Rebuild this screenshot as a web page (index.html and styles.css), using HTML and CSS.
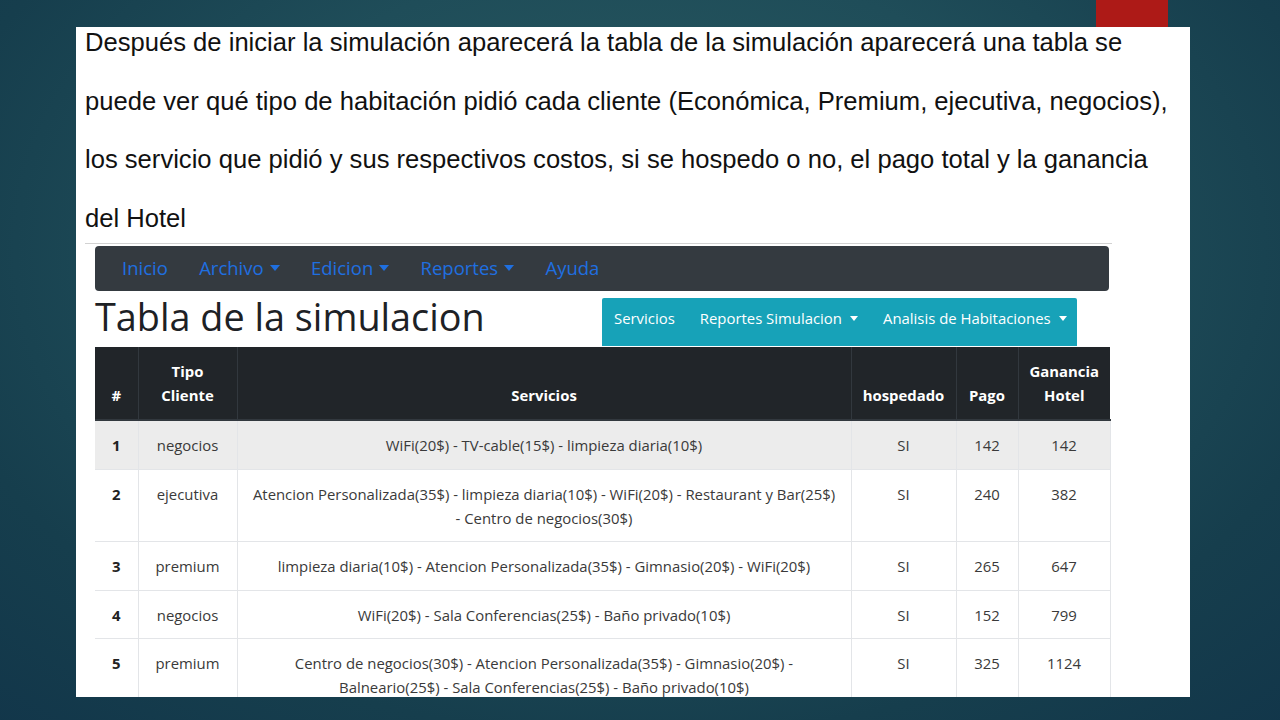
FILE: index.html
```html
<!DOCTYPE html>
<html lang="es">
<head>
<meta charset="utf-8">
<title>Tabla de la simulacion</title>
<link rel="stylesheet" href="styles.css">
</head>
<body>
<div class="slide">
  <div class="topbar"><div class="accent"></div></div>
  <div class="card">
    <p class="intro">Después de iniciar la simulación aparecerá la tabla de la simulación aparecerá una tabla se<br>puede ver qué tipo de habitación pidió cada cliente (Económica, Premium, ejecutiva, negocios),<br>los servicio que pidió y sus respectivos costos, si se hospedo o no, el pago total y la ganancia<br>del Hotel</p>
    <div class="shot">
      <nav class="mainnav">
        <a class="link">Inicio</a>
        <a class="link dd">Archivo</a>
        <a class="link dd">Edicion</a>
        <a class="link dd">Reportes</a>
        <a class="link">Ayuda</a>
      </nav>
      <div class="titlerow">
        <h1 class="title">Tabla de la simulacion</h1>
        <nav class="subnav">
          <a class="sublink">Servicios</a>
          <a class="sublink dd">Reportes Simulacion</a>
          <a class="sublink dd">Analisis de Habitaciones</a>
        </nav>
      </div>
      <table class="sim">
        <colgroup>
          <col class="c-num"><col class="c-tipo"><col class="c-serv"><col class="c-hosp"><col class="c-pago"><col class="c-gan">
        </colgroup>
        <thead>
          <tr>
            <th>#</th>
            <th>Tipo<br>Cliente</th>
            <th>Servicios</th>
            <th>hospedado</th>
            <th>Pago</th>
            <th>Ganancia<br>Hotel</th>
          </tr>
        </thead>
        <tbody>
          <tr class="hl">
            <td class="num">1</td><td>negocios</td>
            <td>WiFi(20$) - TV-cable(15$) - limpieza diaria(10$)</td>
            <td>SI</td><td>142</td><td>142</td>
          </tr>
          <tr>
            <td class="num">2</td><td>ejecutiva</td>
            <td>Atencion Personalizada(35$) - limpieza diaria(10$) - WiFi(20$) - Restaurant y Bar(25$)<br>- Centro de negocios(30$)</td>
            <td>SI</td><td>240</td><td>382</td>
          </tr>
          <tr>
            <td class="num">3</td><td>premium</td>
            <td>limpieza diaria(10$) - Atencion Personalizada(35$) - Gimnasio(20$) - WiFi(20$)</td>
            <td>SI</td><td>265</td><td>647</td>
          </tr>
          <tr>
            <td class="num">4</td><td>negocios</td>
            <td>WiFi(20$) - Sala Conferencias(25$) - Baño privado(10$)</td>
            <td>SI</td><td>152</td><td>799</td>
          </tr>
          <tr>
            <td class="num">5</td><td>premium</td>
            <td>Centro de negocios(30$) - Atencion Personalizada(35$) - Gimnasio(20$) -<br>Balneario(25$) - Sala Conferencias(25$) - Baño privado(10$)</td>
            <td>SI</td><td>325</td><td>1124</td>
          </tr>
        </tbody>
      </table>
    </div>
  </div>
</div>
</body>
</html>
```

FILE: styles.css
```css
html, body {
  margin: 0;
  padding: 0;
}

body {
  width: 1280px;
  height: 720px;
  overflow: hidden;
  background: radial-gradient(ellipse 75% 90% at 50% 35%, #2a5b61 0%, #1f4d59 45%, #163e4d 75%, #12364a 100%);
}

.slide {
  width: 1280px;
  height: 720px;
}

.topbar {
  height: 27px;
  padding-left: 1096px;
}

.accent {
  width: 72px;
  height: 27px;
  background: #ad1a17;
}

.card {
  margin-left: 76px;
  width: 1114px;
  height: 670px;
  background: #ffffff;
  overflow: hidden;
}

.intro {
  margin: -14px 0 -4px 9px;
  font-family: "Liberation Sans", Arial, sans-serif;
  font-size: 25.6px;
  line-height: 58.5px;
  color: #111111;
  white-space: nowrap;
}

.shot {
  margin-left: 9px;
  width: 1027px;
  border-top: 1px solid #d2d2d2;
  padding: 2px 0 0 10px;
  box-sizing: border-box;
  font-family: "Open Sans", "Noto Sans", sans-serif;
}

.mainnav {
  width: 1014px;
  height: 45px;
  background: #343a40;
  border-radius: 4px;
  display: flex;
  align-items: center;
  gap: 31.3px;
  padding-left: 27px;
  box-sizing: border-box;
}

.link {
  color: #1f6fe0;
  font-size: 18.5px;
  line-height: 24px;
  padding-bottom: 1px;
}

.dd::after {
  content: "";
  display: inline-block;
  margin-left: 6px;
  vertical-align: 4px;
  border-top: 6px solid currentColor;
  border-left: 5px solid transparent;
  border-right: 5px solid transparent;
}

.titlerow {
  display: flex;
  align-items: flex-start;
  margin-top: 7px;
  width: 1015px;
}

.title {
  margin: 0;
  font-size: 37.8px;
  font-weight: 500;
  line-height: 38px;
  color: #1d2125;
}

.subnav {
  margin-left: auto;
  margin-right: 33px;
  width: 475px;
  height: 48px;
  box-sizing: border-box;
  padding: 10px 0 0 12px;
  background: #17a2b8;
  display: flex;
  gap: 25px;
  border-radius: 2px 2px 0 0;
}

.sublink {
  color: #ffffff;
  font-size: 14.9px;
  line-height: 20px;
}

.sublink.dd::after {
  margin-left: 8px;
  vertical-align: 3px;
  border-top-width: 5px;
  border-left-width: 4px;
  border-right-width: 4px;
}

.sim {
  margin-top: 1px;
  width: 1015px;
  border-collapse: collapse;
  table-layout: fixed;
  font-size: 14.9px;
  line-height: 24px;
  color: #3a3a3a;
}

.c-num { width: 43px; }
.c-tipo { width: 99px; }
.c-serv { width: 614px; }
.c-hosp { width: 105px; }
.c-pago { width: 62px; }
.c-gan { width: 92px; }

.sim th,
.sim td {
  padding: 12px 0;
  text-align: center;
  white-space: nowrap;
}

.sim th {
  background: #212529;
  color: #ffffff;
  font-weight: 700;
  vertical-align: bottom;
  border-left: 1px solid #32383e;
  border-bottom: 2px solid #32383e;
}

.sim th:first-child {
  border-left: none;
}

.sim td {
  vertical-align: top;
  padding: 12px 0 11.5px;
  border: 1px solid #e3e5e8;
  border-top: none;
}

.sim td:first-child {
  border-left: none;
}

.sim .num {
  font-weight: 700;
  color: #222222;
}

.sim tr.hl td {
  background: #ececec;
}
```
